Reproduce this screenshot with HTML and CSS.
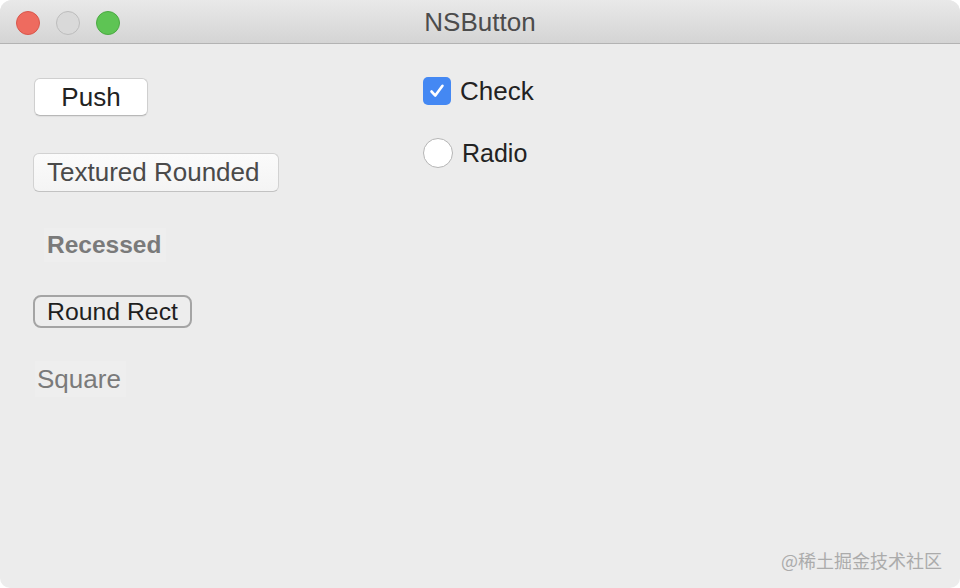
FILE: index.html
```html
<!DOCTYPE html>
<html lang="en">
<head>
<meta charset="utf-8">
<title>NSButton</title>
<link rel="stylesheet" href="styles.css">
</head>
<body>
<div class="window">
  <header class="titlebar">
    <div class="lights">
      <span class="light red"></span>
      <span class="light grey"></span>
      <span class="light green"></span>
    </div>
    <div class="title">NSButton</div>
    <div></div>
  </header>
  <main class="content">
    <section class="col-left">
      <button class="btn push">Push</button>
      <button class="btn textured">Textured Rounded</button>
      <button class="btn recessed">Recessed</button>
      <button class="btn roundrect">Round Rect</button>
      <button class="btn square">Square</button>
    </section>
    <section class="col-right">
      <label class="choice check-row">
        <span class="checkbox">
          <svg width="20" height="20" viewBox="0 0 20 20"><path d="M4.5 10.5 L8.3 14.6 L15.5 4.8" fill="none" stroke="#fff" stroke-width="2.6" stroke-linecap="round" stroke-linejoin="round"/></svg>
        </span>
        <span>Check</span>
      </label>
      <label class="choice radio-row">
        <span class="radio"></span>
        <span>Radio</span>
      </label>
    </section>
  </main>
  <div class="watermark">@稀土掘金技术社区</div>
</div>
</body>
</html>
```

FILE: styles.css
```css
html, body {
  margin: 0;
  padding: 0;
  background: #ffffff;
}
body {
  font-family: "Liberation Sans", Arial, sans-serif;
}
.window {
  position: relative;
  width: 960px;
  height: 588px;
  background: #ececec;
  border-radius: 12px 12px 10px 10px;
  overflow: hidden;
}
.titlebar {
  height: 43px;
  display: grid;
  grid-template-columns: 1fr auto 1fr;
  align-items: center;
  background: linear-gradient(#e9e9e9, #d4d4d4);
  border-bottom: 1px solid #b3b3b3;
}
.lights {
  display: flex;
  gap: 16px;
  padding-left: 16px;
}
.light {
  width: 24px;
  height: 24px;
  box-sizing: border-box;
  border-radius: 50%;
  border: 1px solid;
}
.red { background: #ee6b5f; border-color: #d8574c; }
.grey { background: #d9d9d9; border-color: #bcbcbc; }
.green { background: #5ec454; border-color: #4ba943; }
.title {
  font-size: 26px;
  color: #4c4c4c;
  line-height: 45px;
}
.content {
  display: flex;
  padding-left: 33px;
}
.col-left {
  width: 390px;
  display: flex;
  flex-direction: column;
  align-items: flex-start;
}
.btn {
  font-family: "Liberation Sans", Arial, sans-serif;
  margin: 0;
  box-sizing: border-box;
  cursor: default;
  padding: 0;
}
.push {
  margin-top: 34px;
  margin-left: 1px;
  width: 114px;
  height: 38px;
  font-size: 26px;
  color: #222;
  background: #ffffff;
  border: 1px solid #cfcfcf;
  border-bottom-color: #b8b8b8;
  border-radius: 6px;
  box-shadow: 0 1px 1px rgba(0,0,0,0.06);
}
.textured {
  margin-top: 37px;
  height: 39px;
  padding: 0 19px 0 13px;
  font-size: 26px;
  color: #4a4a4a;
  background: linear-gradient(#fbfbfb, #f4f4f4);
  border: 1px solid #d2d2d2;
  border-bottom-color: #c2c2c2;
  border-radius: 6px;
}
.recessed {
  margin-top: 36px;
  margin-left: 11px;
  height: 34px;
  padding: 0 5px 0 3px;
  font-size: 24.5px;
  font-weight: bold;
  color: #7a7a7a;
  background: #eeeeee;
  border: none;
  line-height: 34px;
}
.roundrect {
  margin-top: 33px;
  height: 33px;
  padding: 0 12px 0 12px;
  font-size: 24.8px;
  color: #1f1f1f;
  background: #ededed;
  border: 2px solid #a4a4a4;
  border-radius: 8px;
  line-height: 29px;
}
.square {
  margin-top: 33px;
  margin-left: 2px;
  height: 36px;
  padding: 0 5px 0 2px;
  font-size: 26px;
  color: #7a7a7a;
  background: #eeeeee;
  border: none;
}
.col-right {
  display: flex;
  flex-direction: column;
  align-items: flex-start;
}
.choice {
  display: flex;
  align-items: center;
  gap: 9px;
  font-size: 26px;
  color: #222;
}
.check-row {
  margin-top: 33px;
  height: 28px;
}
.checkbox {
  width: 28px;
  height: 28px;
  border-radius: 5px;
  background: #4488f3;
  display: flex;
  align-items: center;
  justify-content: center;
}
.radio-row {
  margin-top: 33px;
  height: 30px;
}
.radio-row span:last-child {
  font-size: 25px;
}
.radio {
  width: 30px;
  height: 30px;
  box-sizing: border-box;
  border-radius: 50%;
  background: #ffffff;
  border: 1px solid #b5b5b5;
}
.watermark {
  position: absolute;
  right: 18px;
  bottom: 16px;
  font-family: "Noto Sans CJK SC", "Liberation Sans", sans-serif;
  font-size: 18px;
  color: #ababab;
  line-height: 24px;
}
```
